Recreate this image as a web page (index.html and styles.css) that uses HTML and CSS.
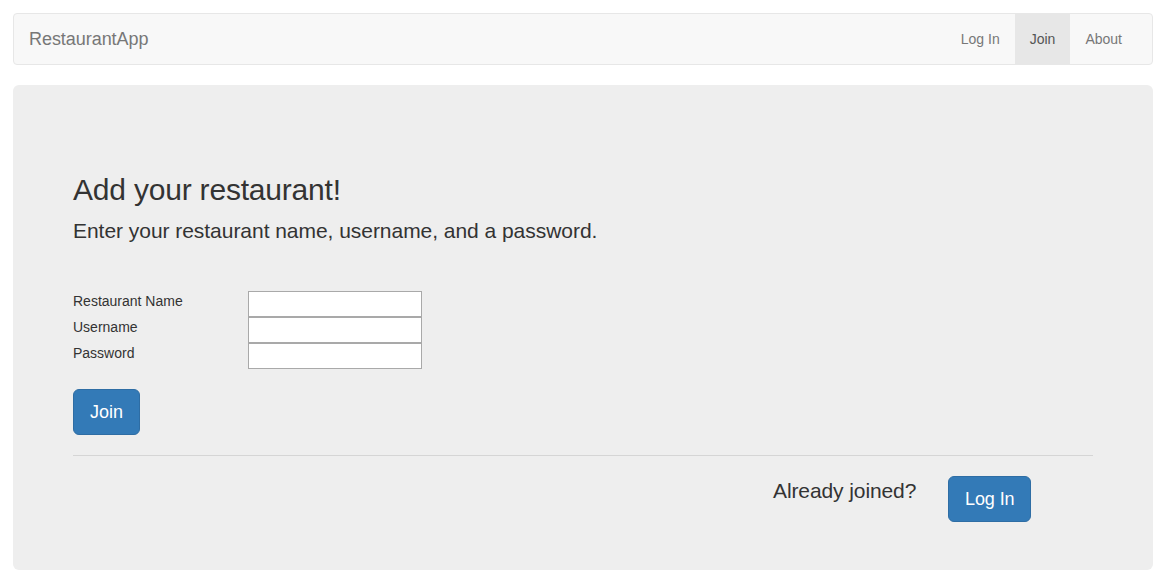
FILE: index.html
```html
<!DOCTYPE html>
<html lang="en">
<head>
<meta charset="utf-8">
<title>RestaurantApp</title>
<link rel="stylesheet" href="styles.css">
</head>
<body>
  <nav class="navbar">
    <a class="brand" href="#">RestaurantApp</a>
    <ul class="nav">
      <li><a href="#">Log In</a></li>
      <li class="active"><a href="#">Join</a></li>
      <li><a href="#">About</a></li>
    </ul>
  </nav>
  <main class="jumbotron">
    <h2 class="title">Add your restaurant!</h2>
    <p class="lead">Enter your restaurant name, username, and a password.</p>
    <form class="join-form">
      <div class="fields">
        <label class="field-label" for="rname">Restaurant Name</label>
        <input class="field-input" id="rname" type="text">
        <label class="field-label" for="uname">Username</label>
        <input class="field-input" id="uname" type="text">
        <label class="field-label" for="pwd">Password</label>
        <input class="field-input" id="pwd" type="password">
      </div>
      <button class="btn" type="button">Join</button>
    </form>
    <hr class="divider">
    <div class="login-row">
      <p class="already">Already joined?</p>
      <button class="btn" type="button">Log In</button>
    </div>
  </main>
</body>
</html>
```
FILE: styles.css
```css
* { box-sizing: border-box; }
html, body { margin: 0; }
body {
  padding: 13px;
  font-family: "Liberation Sans", Arial, sans-serif;
  font-size: 14px;
  line-height: 20px;
  color: #333;
  background: #fff;
}
.navbar {
  display: flex;
  justify-content: space-between;
  align-items: stretch;
  height: 52px;
  background: #f8f8f8;
  border: 1px solid #e7e7e7;
  border-radius: 4px;
  margin-bottom: 20px;
}
.brand {
  padding: 15px 15px;
  font-size: 18px;
  line-height: 20px;
  color: #777;
  text-decoration: none;
  letter-spacing: -0.05px;
}
.nav {
  display: flex;
  list-style: none;
  margin: 0;
  padding: 0 15px 0 0;
}
.nav a {
  display: block;
  padding: 15px 15px;
  line-height: 20px;
  color: #777;
  text-decoration: none;
}
.nav .active a {
  background: #e7e7e7;
  color: #555;
}
.jumbotron {
  background: #eee;
  border-radius: 6px;
  padding: 48px 60px;
}
.title {
  margin: 40px 0 10px;
  font-size: 30px;
  line-height: 33px;
  font-weight: 500;
  letter-spacing: -0.2px;
}
.lead {
  margin: 0 0 15px;
  font-size: 21px;
  line-height: 30px;
  font-weight: 200;
  letter-spacing: -0.04px;
}
.join-form {
  padding-top: 30px;
}
.fields {
  display: grid;
  grid-template-columns: 175px 174px;
  grid-auto-rows: 26px;
}
.field-label {
  align-self: start;
  line-height: 20px;
  font-size: 14px;
  font-weight: 400;
}
.field-input {
  width: 174px;
  height: 26px;
  border: 1px solid #a9a9a9;
  background: #fff;
  margin: 0;
  padding: 2px 4px;
  font-family: "Liberation Sans", Arial, sans-serif;
  font-size: 13px;
}
.btn {
  margin-top: 20px;
  display: inline-block;
  padding: 10px 16px;
  font-family: "Liberation Sans", Arial, sans-serif;
  font-size: 18px;
  line-height: 24px;
  color: #fff;
  background: #337ab7;
  border: 1px solid #2e6da4;
  border-radius: 6px;
}
.divider {
  margin: 20px 0;
  border: 0;
  border-top: 1px solid #d5d5d5;
}
.login-row {
  display: flex;
  align-items: flex-start;
  padding-left: 700px;
}
.already {
  margin: 0;
  width: 175px;
  font-size: 21px;
  line-height: 30px;
  font-weight: 200;
  letter-spacing: -0.1px;
}
.login-row .btn {
  margin-top: 0;
  letter-spacing: -0.1px;
}
```
